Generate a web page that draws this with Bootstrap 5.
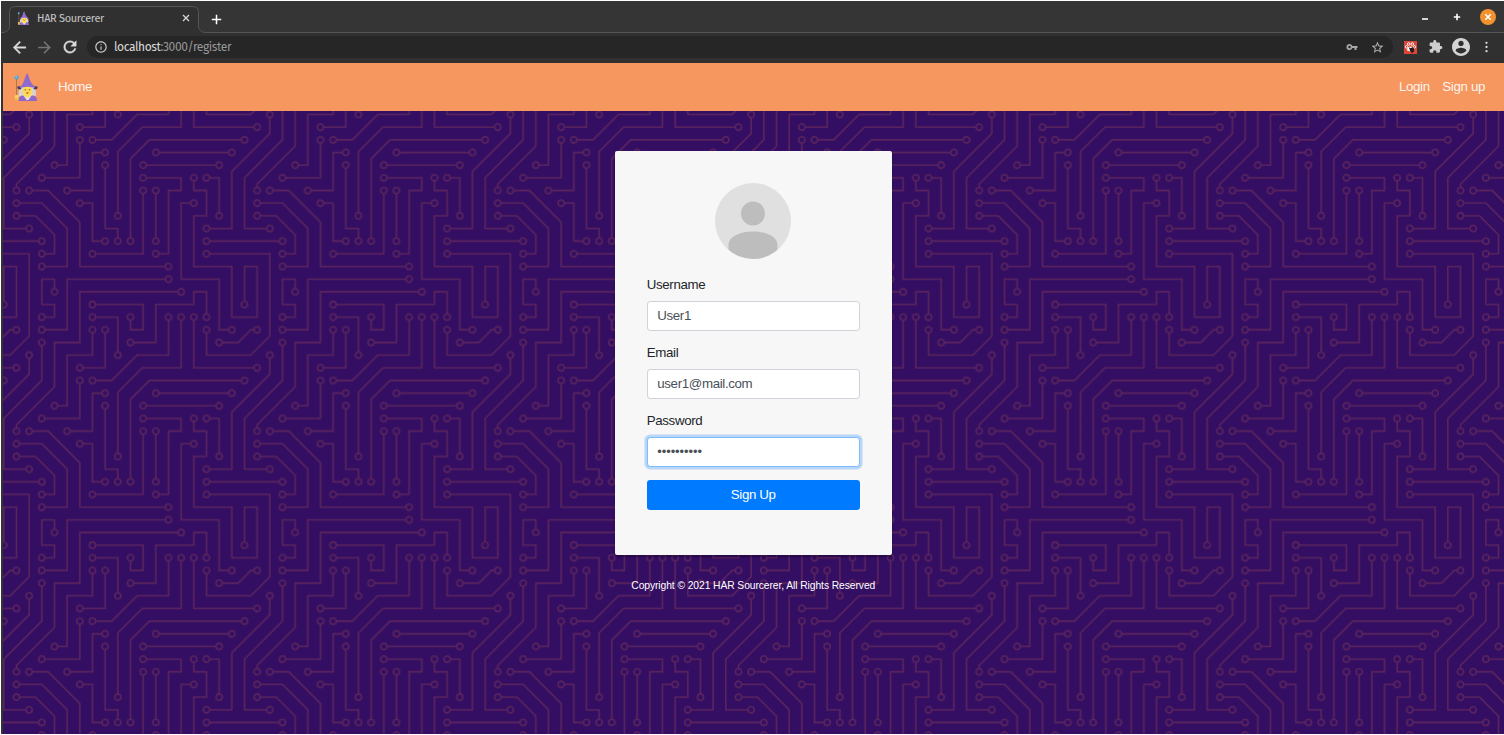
<!DOCTYPE html>
<html lang="en">
<head>
<meta charset="utf-8">
<meta name="viewport" content="width=device-width, initial-scale=1">
<title>HAR Sourcerer</title>
<link href="https://cdn.jsdelivr.net/npm/bootstrap@5.3.0/dist/css/bootstrap.min.css" rel="stylesheet">
<style>
html{font-size:12.667px}
body{font-family:"Liberation Sans",Arial,sans-serif;font-size:13.3px;letter-spacing:-.35px;height:735px;overflow:hidden;background:#fff;color:#212529;padding:1px 0 1px 1px}
.win{background:#333;height:733px;padding-left:1.5px}
.chrome{font-family:"Fira Sans","Noto Sans",sans-serif;font-size:11px;height:62px;background:#303030;margin-left:-1.5px}
.tabstrip{height:32px;background:#353535;border-bottom:1px solid #565656;padding:5px 8px 0}
.tab{width:190px;height:27px;padding:0 9px 3px 8px;color:#c4c4c4;position:relative}
.tab-shape{position:absolute;left:-7px;top:0}
.tab>:not(.tab-shape){position:relative}
.tab-title{letter-spacing:-.33px;margin-left:7px;line-height:1}
.tools{height:30px;padding:0 6px 2px 11px}
.omni{height:22px;border-radius:11px;background:#262626;margin:0 0 0 10px;padding:0 9px 0 8px}
.url{font-size:12px;letter-spacing:-.4px;color:#989898;margin-left:7px;line-height:1}
.url b{font-weight:400;color:#dadada}
.closer{width:16px;height:16px;border-radius:50%;background:#f19130}
.site-nav{height:48px;background:#f5975f;padding:0 19px 0 11.5px}
.site-nav a{color:rgba(255,255,255,.92);text-decoration:none}
.page{height:623px;position:relative;background:#330e62}
.circuit{position:absolute;left:0;top:-48px;width:100%;height:671px}
.page-body{position:relative;padding-top:40px}
.signup{width:277px;height:404px;background:#f7f7f7;border:0;border-radius:2px;padding:32px 32px 0;box-shadow:0 2px 2px rgba(0,0,0,.3)}
.signup .form-label{margin-bottom:.5rem;line-height:19px}
.signup .form-control{height:30px;padding:0 .75rem;border-radius:.25rem;border-color:#ced4da;color:#495057;line-height:28px;font-size:13.3px;letter-spacing:-.35px}
.signup .form-control[type=password]{font-size:12.9px;letter-spacing:-.05px}
.signup .form-control.focused{border-color:#80bdff;box-shadow:0 0 0 .2rem rgba(0,123,255,.25)}
.field{height:68.1px}
.btn-join{height:30px;background:#007bff;color:#fff;border-radius:.25rem;padding:0;line-height:30px;border:0;font-size:13.3px;letter-spacing:-.35px}
.legal{font-size:10.3px;letter-spacing:-.08px;color:#fff;line-height:16px;margin-top:22.500px}
svg{display:block;flex:none}
</style>
</head>
<body>
<svg width="0" height="0" style="position:absolute">
<symbol id="mage" viewBox="0 0 24 28">
<path d="M2.500 5v18" stroke="#a8704f" stroke-width=".9"/>
<circle cx="2.600" cy="4.600" r="2.100" fill="#40a5dc"/><circle cx="2.200" cy="4" r=".8" fill="#a7dcf5"/>
<path d="M5.500 14c1-2 14-2 16 0l.5 8-4 4H7l-2.500-4z" fill="#d8d4ce"/>
<path d="M4 28c0-4 2.500-5.500 5-5.500h9c3 0 5 1.500 5 5.500z" fill="#9166cc"/>
<path d="M8.500 21l4 6h2l4-6-5-2z" fill="#e8dfca"/>
<ellipse cx="13.400" cy="18.200" rx="4.800" ry="6" fill="#ffdb55"/>
<path d="M3.300 14.300c0-1.300 2-1.300 3.300-1l.8 2.700c-2.200.9-4.100.4-4.100-1.700zM23.600 14.300c0-1.300-2-1.300-3.300-1l-.8 2.700c2.200.9 4.100.4 4.100-1.700z" fill="#4c3b5e"/>
<path d="M5.200 14.600c2-1 3.200-2.900 4.300-5.600 1.300-3 1.800-6 3.500-8.500 1 0 1.500 2 2 4 .7 3.500 3 7 6.700 10-3.200.3-4.700-.8-8.300-.8-3.500 0-5 1.200-8.200.9z" fill="#9068ce"/>
<path d="M10.600 16.800h1.500M14.800 16.800h1.500" stroke="#66451f" stroke-width=".9"/>
<path d="M11.600 19.700q1.800-1 3.600 0-1.800 1.900-3.600 0z" fill="#d8453e"/>
<circle cx="2.800" cy="24" r="2.200" fill="#fbd05a"/><path d="M1 25.500h4v2H1z" fill="#e9b64a"/>
</symbol>
</svg>
<div class="win">
<header class="chrome">
 <div class="tabstrip d-flex">
  <div class="tab d-flex align-items-center">
   <svg class="tab-shape" width="205" height="28" viewBox="0 0 205 28"><path d="M0 26.500c4.500 0 7.500-2.500 7.500-7V6.500q0-6 6-6h177q6 0 6 6v13c0 4.500 3 7 7.500 7V28H0z" fill="#303030"/><path d="M0 26.500c4.500 0 7.500-2.500 7.500-7V6.500q0-6 6-6h177q6 0 6 6v13c0 4.500 3 7 7.500 7" fill="none" stroke="#565656"/></svg>
   <svg width="13" height="14"><use href="#mage"/></svg>
   <span class="tab-title">HAR Sourcerer</span>
   <svg class="ms-auto" width="8" height="8" viewBox="0 0 8 8" stroke="#d8d8d8" stroke-width="1.300"><path d="M1 1l6 6M7 1L1 7"/></svg>
  </div>
  <svg style="margin:8px 0 0 12px" width="11" height="11" viewBox="0 0 11 11" stroke="#fff" stroke-width="1.500"><path d="M5.500 .8v9.400M.8 5.500h9.400"/></svg>
  <div class="ms-auto d-flex" style="margin-top:3px">
   <svg width="8" height="16" viewBox="0 0 8 16"><path d="M1 10h6" stroke="#fff" stroke-width="1.600"/></svg>
   <svg style="margin:0 19px 0 24px" width="8" height="16" viewBox="0 0 8 16"><path d="M.8 8h6.400M4 4.800v6.400" stroke="#fff" stroke-width="1.600"/></svg>
   <div class="closer d-flex align-items-center justify-content-center"><svg width="8" height="8" viewBox="0 0 8 8" stroke="#fff" stroke-width="1.600"><path d="M1.300 1.300l5.400 5.400M6.700 1.300L1.300 6.700"/></svg></div>
  </div>
 </div>
 <div class="tools d-flex align-items-center">
  <svg width="15" height="15" viewBox="2.500 2.500 19 19" fill="#dcdcdc" stroke="#dcdcdc" stroke-width=".5"><path d="M20 11H7.830l5.590-5.590L12 4l-8 8 8 8 1.410-1.410L7.830 13H20v-2z"/></svg>
  <svg style="margin-left:10px" width="15" height="15" viewBox="2.500 2.500 19 19" fill="#757575"><path d="M12 4l-1.410 1.410L16.170 11H4v2h12.170l-5.580 5.590L12 20l8-8z"/></svg>
  <svg style="margin-left:11px" width="14" height="14" viewBox="3 3 18 18" fill="#dcdcdc" stroke="#dcdcdc" stroke-width=".5"><path d="M17.650 6.350C16.200 4.900 14.210 4 12 4c-4.420 0-7.990 3.580-7.990 8s3.570 8 7.990 8c3.730 0 6.840-2.550 7.730-6h-2.080c-.82 2.330-3.040 4-5.650 4-3.310 0-6-2.690-6-6s2.690-6 6-6c1.660 0 3.140.69 4.220 1.780L13 11h7V4l-2.350 2.350z"/></svg>
  <div class="omni d-flex align-items-center flex-grow-1">
   <svg width="12" height="12" viewBox="1.500 1.500 21 21" fill="#cfcfcf"><path d="M11 7h2v2h-2zm0 4h2v6h-2zm1-9C6.480 2 2 6.480 2 12s4.480 10 10 10 10-4.480 10-10S17.520 2 12 2zm0 18c-4.410 0-8-3.590-8-8s3.590-8 8-8 8 3.590 8 8-3.590 8-8 8z"/></svg>
   <span class="url"><b>localhost</b>:3000/register</span>
   <svg class="ms-auto" width="12" height="12" viewBox="0 0 24 24" fill="#a8a8a8"><path fill-rule="evenodd" d="M12.650 10A6 6 0 0 0 7 6a6 6 0 1 0 5.650 8H17v4h4v-4h2v-4H12.650zM7 14.500a2.500 2.500 0 1 1 0-5 2.500 2.500 0 0 1 0 5z"/></svg>
   <svg style="margin-left:13px" width="13" height="13" viewBox="1 1 22 22" fill="#b4b4b4"><path d="M22 9.240l-7.190-.62L12 2 9.190 8.630 2 9.240l5.460 4.730L5.820 21 12 17.270 18.180 21l-1.630-7.030L22 9.240zM12 15.400l-3.760 2.270 1-4.280-3.320-2.880 4.380-.38L12 6.100l1.710 4.040 4.380.38-3.320 2.880 1 4.280L12 15.400z"/></svg>
  </div>
  <svg style="margin-left:11px" width="13" height="13" viewBox="0 0 13 13"><path fill="#dc4638" d="M0 0h13v13H0z"/><g fill="none" stroke="#fff" stroke-width=".9"><circle cx="4.700" cy="3" r="1.300"/><circle cx="8.300" cy="3" r="1.300"/><ellipse cx="2.500" cy="5.800" rx="1.100" ry="1.300"/><ellipse cx="10.500" cy="5.800" rx="1.100" ry="1.300"/></g><path fill="#fff" d="M3 9.500c0-2.500 1.500-4 3.500-4s3.500 1.500 3.500 4l-3.500 1z"/><path fill="#291a18" d="M5 6.500l2 .5 2-1 1 1.500v3l-2 1.500-2-2z"/></svg>
  <svg style="margin-left:12px" width="14" height="14" viewBox="1 1 23 23" fill="#cecece"><path d="M20.500 11H19V7c0-1.100-.9-2-2-2h-4V3.500C13 2.120 11.880 1 10.500 1S8 2.120 8 3.500V5H4c-1.100 0-1.990.9-1.990 2v3.800H3.500c1.490 0 2.700 1.210 2.700 2.700s-1.210 2.700-2.700 2.700H2V20c0 1.100.9 2 2 2h3.800v-1.500c0-1.490 1.210-2.700 2.700-2.700 1.490 0 2.700 1.210 2.700 2.700V22H17c1.100 0 2-.9 2-2v-4h1.500c1.380 0 2.500-1.120 2.500-2.500S21.880 11 20.500 11z"/></svg>
  <svg style="margin-left:9px" width="18" height="18" viewBox="2 2 20 20" fill="#d4d4d4"><path d="M12 2C6.480 2 2 6.480 2 12s4.480 10 10 10 10-4.480 10-10S17.520 2 12 2zm0 3c1.660 0 3 1.340 3 3s-1.340 3-3 3-3-1.340-3-3 1.340-3 3-3zm0 14.200c-2.500 0-4.710-1.280-6-3.220.03-1.990 4-3.080 6-3.080 1.990 0 5.970 1.090 6 3.080-1.290 1.940-3.500 3.220-6 3.220z"/></svg>
  <svg style="margin:0 10px 0 15px" width="3" height="12" viewBox="0 0 3 12" fill="#dadada"><circle cx="1.500" cy="1.800" r="1.150"/><circle cx="1.500" cy="6" r="1.150"/><circle cx="1.500" cy="10.200" r="1.150"/></svg>
 </div>
</header>
<nav class="site-nav d-flex align-items-center">
 <svg style="margin-bottom:1px" width="24" height="28"><use href="#mage"/></svg>
 <a href="#" style="margin-left:20px">Home</a>
 <a href="#" class="ms-auto">Login</a>
 <a href="#" class="ms-3">Sign up</a>
</nav>
<main class="page overflow-hidden">
 <svg class="circuit" aria-hidden="true">
  <defs><pattern id="board" width="304" height="304" patternUnits="userSpaceOnUse" patternTransform="scale(.7917)">
   <path id="traces" fill="#5b245d" d="M44.1 224a5 5 0 1 1 0 2H0v-2h44.1zm160 48a5 5 0 1 1 0 2H82v-2h122.1zm57.8-46a5 5 0 1 1 0-2H304v2h-42.1zm0 16a5 5 0 1 1 0-2H304v2h-42.1zm6.2-114a5 5 0 1 1 0 2h-86.2a5 5 0 1 1 0-2h86.2zm-256-48a5 5 0 1 1 0 2H0v-2h12.1zm185.8 34a5 5 0 1 1 0-2h86.2a5 5 0 1 1 0 2h-86.2zM258 12.1a5 5 0 1 1-2 0V0h2v12.1zm-64 208a5 5 0 1 1-2 0v-54.2a5 5 0 1 1 2 0v54.2zm48-198.2V80h62v2h-64V21.9a5 5 0 1 1 2 0zm16 16V64h46v2h-48V37.9a5 5 0 1 1 2 0zm-128 96V208h16v12.1a5 5 0 1 1-2 0V210h-16v-76.1a5 5 0 1 1 2 0zm-5.9-21.9a5 5 0 1 1 0 2H114v48H85.9a5 5 0 1 1 0-2H112v-48h12.1zm-6.200 130a5 5 0 1 1 0-2H176v-74.1a5 5 0 1 1 2 0V242h-60.1zm-16-64a5 5 0 1 1 0-2H114v48h10.1a5 5 0 1 1 0 2H112v-48h-10.1zM66 284.1a5 5 0 1 1-2 0V274H50v30h-2v-32h18v12.1zM236.1 176a5 5 0 1 1 0 2H226v94h48v32h-2v-30h-48v-98h12.1zm25.8-30a5 5 0 1 1 0-2H274v44.1a5 5 0 1 1-2 0V146h-10.1zm-64 96a5 5 0 1 1 0-2H208v-80h16v-14h-42.1a5 5 0 1 1 0-2H226v18h-16v80h-12.1zm86.2-210a5 5 0 1 1 0 2H272V0h2v32h10.1zM98 101.9V146H53.9a5 5 0 1 1 0-2H96v-42.1a5 5 0 1 1 2 0zM53.9 34a5 5 0 1 1 0-2H80V0h2v34H53.9zm60.1 3.9V66H82v64H69.9a5 5 0 1 1 0-2H80V64h32V37.9a5 5 0 1 1 2 0zM101.9 82a5 5 0 1 1 0-2H128V37.9a5 5 0 1 1 2 0V82h-28.1zm16-64a5 5 0 1 1 0-2H146v44.1a5 5 0 1 1-2 0V18h-26.1zm102.2 270a5 5 0 1 1 0 2H98v14h-2v-16h124.1zM242 149.9V160h16v34h-16v62h48v48h-2v-46h-48v-66h16v-30h-16v-12.1a5 5 0 1 1 2 0zM53.9 18a5 5 0 1 1 0-2H64V2H48V0h18v18H53.9zm112 32a5 5 0 1 1 0-2H192V0h50v2h-48v48h-28.1zm-48-48a5 5 0 0 1-9.8-2h2.07a3 3 0 1 0 5.66 0H178v34h-18V21.9a5 5 0 1 1 2 0V32h14V2h-58.1zm0 96a5 5 0 1 1 0-2H137l32-32h39V21.9a5 5 0 1 1 2 0V66h-40.17l-32 32H117.9zm28.1 90.1a5 5 0 1 1-2 0v-76.51L175.59 80H224V21.9a5 5 0 1 1 2 0V82h-49.59L146 112.41v75.69zm16 32a5 5 0 1 1-2 0v-99.51L184.59 96H300.1a5 5 0 0 1 3.9-3.9v2.07a3 3 0 0 0 0 5.66v2.07a5 5 0 0 1-3.9-3.9H185.41L162 121.41v98.69zm-144-64a5 5 0 1 1-2 0v-3.51l48-48V48h32V0h2v50H66v55.41l-48 48v2.69zM50 53.9v43.51l-48 48V208h26.1a5 5 0 1 1 0 2H0v-65.41l48-48V53.9a5 5 0 1 1 2 0zm-16 16V89.41l-34 34v-2.82l32-32V69.9a5 5 0 1 1 2 0zM12.1 32a5 5 0 1 1 0 2H9.41L0 43.41V40.6L8.59 32h3.51zm265.8 18a5 5 0 1 1 0-2h18.69l7.41-7.41v2.82L297.41 50H277.9zm-16 160a5 5 0 1 1 0-2H288v-71.41l16-16v2.82l-14 14V210h-28.1zm-208 32a5 5 0 1 1 0-2H64v-22.59L40.59 194H21.9a5 5 0 1 1 0-2H41.41L66 216.59V242H53.9zm150.2 14a5 5 0 1 1 0 2H96v-56.6L56.6 162H37.9a5 5 0 1 1 0-2h19.5L98 200.6V256h106.1zm-150.2 2a5 5 0 1 1 0-2H80v-46.59L48.59 178H21.9a5 5 0 1 1 0-2H49.41L82 208.59V258H53.9zM34 39.8v1.61L9.41 66H0v-2h8.59L32 40.59V0h2v39.8zM2 300.1a5 5 0 0 1 3.9 3.9H3.83A3 3 0 0 0 0 302.17V256h18v48h-2v-46H2v42.1zM34 241v63h-2v-62H0v-2h34v1zM17 18H0v-2h16V0h2v18h-1zm273-2h14v2h-16V0h2v16zm-32 273v15h-2v-14h-14v14h-2v-16h18v1zM0 92.1A5.02 5.02 0 0 1 6 97a5 5 0 0 1-6 4.9v-2.07a3 3 0 1 0 0-5.66V92.1zM80 272h2v32h-2v-32zm37.9 32h-2.07a3 3 0 0 0-5.66 0h-2.07a5 5 0 0 1 9.8 0zM5.9 0A5.02 5.02 0 0 1 0 5.9V3.83A3 3 0 0 0 3.83 0H5.9zm294.2 0h2.07A3 3 0 0 0 304 3.83V5.9a5 5 0 0 1-3.9-5.9zm3.9 300.1v2.07a3 3 0 0 0-1.83 1.83h-2.07a5 5 0 0 1 3.9-3.9z"/>
  </pattern></defs>
  <rect width="100%" height="100%" fill="url(#board)"/>
 </svg>
 <div class="page-body d-flex flex-column align-items-center">
  <form class="card signup">
   <svg class="mx-auto" style="margin-bottom:16.300px" width="76" height="76" viewBox="0 0 76 76"><defs><clipPath id="round"><circle cx="38" cy="38" r="38"/></clipPath></defs><g clip-path="url(#round)"><path fill="#e0e0e0" d="M0 0h76v76H0z"/><g fill="#bdbdbd"><circle cx="38" cy="30.500" r="12"/><path d="M13.500 76V62c0-8 11-13.500 24.500-13.500S62.500 54 62.500 62v14z"/></g></g></svg>
   <div class="field"><label class="form-label d-block" for="u">Username</label><input id="u" class="form-control" value="User1"></div>
   <div class="field"><label class="form-label d-block" for="e">Email</label><input id="e" class="form-control" value="user1@mail.com"></div>
   <div class="field"><label class="form-label d-block" for="p">Password</label><input id="p" type="password" class="form-control focused" value="sourcerer1"></div>
   <button type="button" class="btn btn-join w-100">Sign Up</button>
  </form>
  <div class="legal">Copyright © 2021 HAR Sourcerer, All Rights Reserved</div>
 </div>
</main>
</div>
<script src="https://cdn.jsdelivr.net/npm/bootstrap@5.3.0/dist/js/bootstrap.bundle.min.js"></script>
<script>
// Turn every solid pad of the circuit traces into a ring: find each pad's
// centre from its arc and append a counter-wound inner circle.
(function(){
 const p=document.getElementById('traces'),d=p.getAttribute('d');
 let x=0,y=0,sx=0,sy=0,holes='';
 for(const m of d.matchAll(/([a-zA-Z])([^a-zA-Z]*)/g)){
  const c=m[1],n=(m[2].match(/-?(?:\d+\.?\d*|\.\d+)/g)||[]).map(Number),r=c===c.toLowerCase();
  const u=c.toLowerCase();
  if(u==='z'){x=sx;y=sy;continue;}
  if(u==='h'){x=r?x+n[0]:n[0];continue;}
  if(u==='v'){y=r?y+n[0]:n[0];continue;}
  const step=u==='a'?7:2;
  for(let i=0;i<n.length;i+=step){
   const a=n[i+step-2],b=n[i+step-1];
   if(c==='a'&&n[i]===5&&n[i+3]===1&&n[i+4]===1){
    const cx=x+a/2+b/2*4.9,cy=y+b/2-a/2*4.9;
    holes+='M'+cx.toFixed(2)+' '+(cy-3).toFixed(2)+'a3 3 0 1 0 0 6a3 3 0 1 0 0-6z';
   }
   x=r?x+a:a;y=r?y+b:b;
   if(u==='m'&&i===0){sx=x;sy=y;}
  }
 }
 p.setAttribute('d',d+holes);
})();
</script>
</body>
</html>
